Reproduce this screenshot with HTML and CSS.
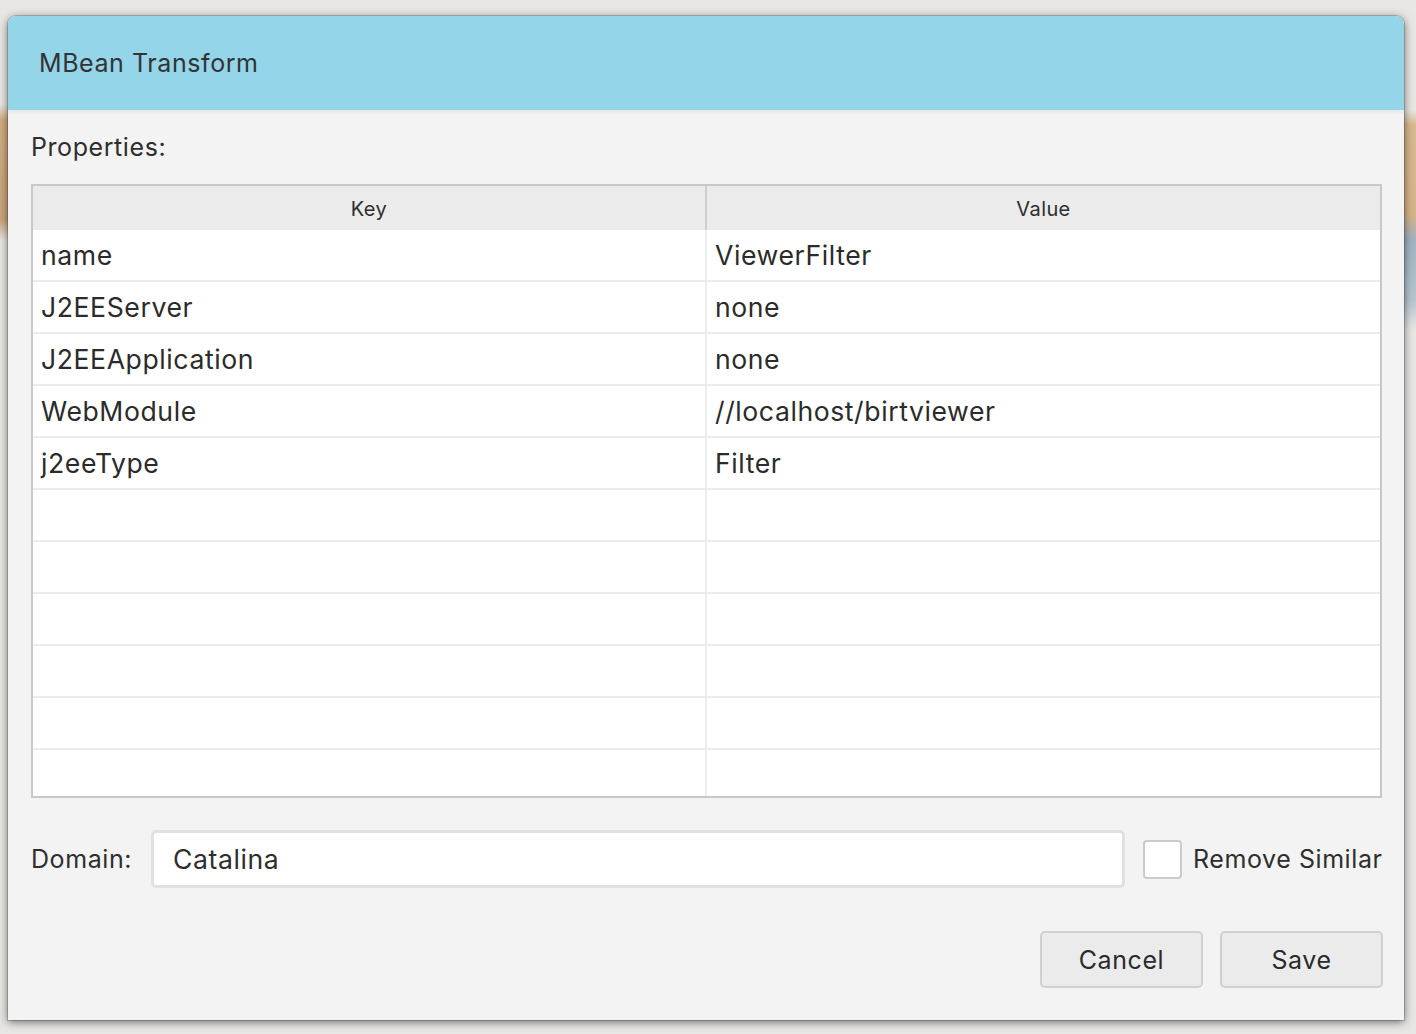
FILE: index.html
```html
<!DOCTYPE html>
<html>
<head>
<meta charset="utf-8">
<link rel="stylesheet" href="styles.css">
</head>
<body>
<div class="backdrop">
  <div class="window">
    <div class="titlebar">MBean Transform</div>
    <div class="content">
      <div class="section-label">Properties:</div>
      <div class="table">
        <div class="thead">
          <div class="th">Key</div>
          <div class="th">Value</div>
        </div>
        <div class="row"><div class="cell">name</div><div class="cell">ViewerFilter</div></div>
        <div class="row"><div class="cell">J2EEServer</div><div class="cell">none</div></div>
        <div class="row"><div class="cell">J2EEApplication</div><div class="cell">none</div></div>
        <div class="row"><div class="cell">WebModule</div><div class="cell">//localhost/birtviewer</div></div>
        <div class="row"><div class="cell">j2eeType</div><div class="cell">Filter</div></div>
        <div class="row"><div class="cell"></div><div class="cell"></div></div>
        <div class="row"><div class="cell"></div><div class="cell"></div></div>
        <div class="row"><div class="cell"></div><div class="cell"></div></div>
        <div class="row"><div class="cell"></div><div class="cell"></div></div>
        <div class="row"><div class="cell"></div><div class="cell"></div></div>
        <div class="row last"><div class="cell"></div><div class="cell"></div></div>
      </div>
      <div class="domain-row">
        <div class="domain-label">Domain:</div>
        <div class="text-input">Catalina</div>
        <div class="checkbox"></div>
        <div class="check-label">Remove Similar</div>
      </div>
      <div class="buttons">
        <div class="btn">Cancel</div>
        <div class="btn">Save</div>
      </div>
    </div>
  </div>
</div>
</body>
</html>
```

FILE: styles.css
```css
* { box-sizing: border-box; }
html, body { margin: 0; padding: 0; }
body {
  width: 1416px;
  height: 1034px;
  overflow: hidden;
  font-family: "Inter", "Open Sans", "Liberation Sans", sans-serif;
  color: #2e2e2e;
  letter-spacing: 0.036em;
}
.backdrop {
  width: 1416px;
  height: 1034px;
  padding: 16px 12px 14px 8px;
  background:
    linear-gradient(to bottom, transparent 110px, #d9b990 125px, #d6b48a 215px, #9fb3bf 240px, #b7c6cf 300px, transparent 330px) right / 12px 100% no-repeat,
    linear-gradient(to bottom, transparent 105px, #d2ae82 120px, #c9a57c 220px, transparent 240px) left / 8px 100% no-repeat,
    #e8e7e4;
}
.window {
  width: 1396px;
  height: 1004px;
  border-radius: 8px 8px 0 0;
  background: #f3f3f3;
  box-shadow: 0 0 0 1px rgba(0,0,0,0.18), 0 2px 10px rgba(0,0,0,0.55);
  display: flex;
  flex-direction: column;
  overflow: hidden;
}
.titlebar {
  height: 94px;
  flex: none;
  background: #94d5e9;
  font-size: 25px;
  padding-left: 31px;
  display: flex;
  align-items: center;
  color: #333;
  box-shadow: 0 2px 4px rgba(0,0,0,0.06);
}
.content {
  padding: 0 23px 0 23px;
  display: flex;
  flex-direction: column;
}
.section-label {
  height: 74px;
  font-size: 25px;
  display: flex;
  align-items: center;
  line-height: 1;
}
.table {
  width: 1351px;
  height: 614px;
  border: 2px solid #c8c8c8;
  background: #ffffff;
  display: flex;
  flex-direction: column;
}
.thead {
  height: 44px;
  flex: none;
  display: grid;
  grid-template-columns: 672px 1fr;
  background: #ebebeb;
}
.th {
  font-size: 20px;
  display: flex;
  align-items: center;
  justify-content: center;
  padding-top: 1px;
  letter-spacing: 0.02em;
}
.th + .th { border-left: 2px solid #cfcfcf; }
.row {
  height: 52px;
  flex: none;
  display: grid;
  grid-template-columns: 672px 1fr;
  border-bottom: 2px solid #ececec;
}
.row.last { border-bottom: none; height: 46px; }
.cell {
  font-size: 26.6px;
  display: flex;
  align-items: center;
  padding-left: 8px;
  color: #2b2b2b;
}
.cell + .cell { border-left: 2px solid #ececec; }
.domain-row {
  height: 58px;
  margin-top: 32px;
  display: flex;
  align-items: center;
}
.domain-label {
  font-size: 25px;
  width: 120px;
  flex: none;
}
.text-input {
  width: 974px;
  height: 58px;
  background: #ffffff;
  border: 3px solid #e1e1e1;
  border-radius: 5px;
  font-size: 26.6px;
  display: flex;
  align-items: center;
  padding-left: 19px;
  flex: none;
}
.checkbox {
  width: 39px;
  height: 39px;
  margin-left: 18px;
  background: #fff;
  border: 2px solid #cbcbcb;
  border-radius: 4px;
  flex: none;
}
.check-label {
  font-size: 25px;
  margin-left: 11px;
  white-space: nowrap;
}
.buttons {
  margin-top: 43px;
  display: flex;
  justify-content: flex-end;
  gap: 17px;
  margin-right: -2px;
}
.btn {
  width: 163px;
  height: 57px;
  background: #ebebeb;
  border: 2px solid #d0d0d0;
  border-radius: 5px;
  font-size: 25px;
  display: flex;
  align-items: center;
  justify-content: center;
  color: #2b2b2b;
}
```
